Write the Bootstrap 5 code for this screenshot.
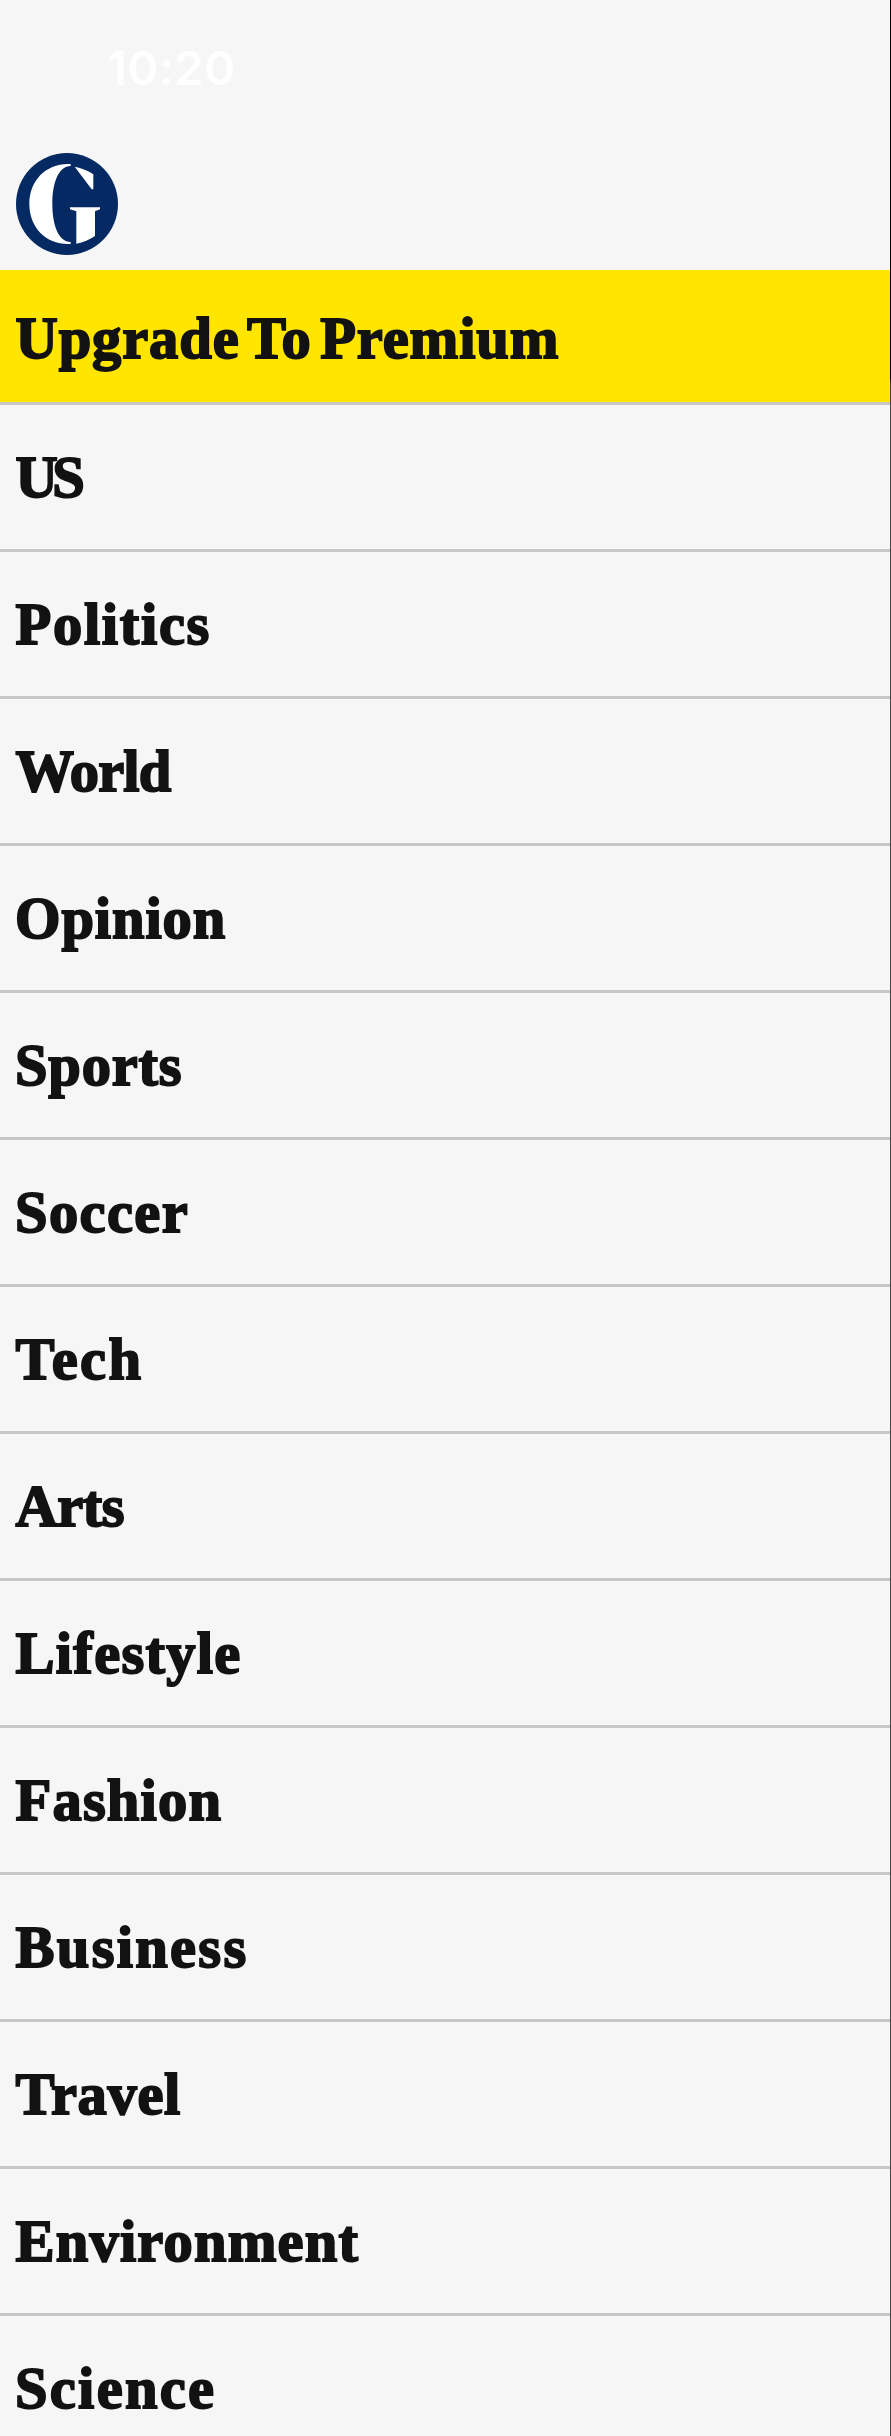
<!DOCTYPE html>
<html lang="en">
<head>
<meta charset="utf-8">
<meta name="viewport" content="width=device-width, initial-scale=1">
<title>Sections</title>
<link href="https://cdn.jsdelivr.net/npm/bootstrap@5.3.0/dist/css/bootstrap.min.css" rel="stylesheet">
<style>
  body { background: #f6f6f6; color: #121212; }
  .app-shell { height: 2436px; }
  .page-edge { width: 1px; background: linear-gradient(#000 0, #000 378px, #444446 384px); }
  .status-bar { height: 153px; padding: 44px 0 0 107px; }
  .clock { font: 600 47px/48px Inter, sans-serif; letter-spacing: .5px; color: #fff; }
  .brand-row { height: 117px; padding-left: 16px; }
  .section-list { --bs-list-group-border-radius: 0; }
  .section-list .section-link {
    height: 147px; padding: 2px 0 0 15.5px; background: transparent; color: #121212;
    border: solid #c7c7c7; border-width: 0 0 3px; border-radius: 0;
    font: bold 58.5px/1.15 "Liberation Serif", serif; white-space: nowrap;
    letter-spacing: var(--track, 0); -webkit-text-stroke: 1.9px #121212;
  }
  .section-list .premium { height: 135px; padding-top: 6px; background: #ffe500; word-spacing: -7px; }
  .section-list .hang-s { padding-left: 15px; }
</style>
</head>
<body>
<div class="app-shell d-flex overflow-hidden">
  <main class="flex-grow-1 d-flex flex-column">
    <header>
      <div class="status-bar"><div class="clock">10:20</div></div>
      <div class="brand-row">
        <svg class="d-block" width="102" height="102" viewBox="48 39 306 306" role="img" aria-label="Home">
          <circle cx="201" cy="192" r="153" fill="#052962"/>
          <g fill="#fff">
            <path d="M212 72C140 68 88 120 88 192s52 124 124 120v-6c-36 0-55-50-55-114s19-114 55-114z"/>
            <path d="M224 80c21 4 40 12 56 23v45h-5z"/>
            <path d="M210 202h90v6l-15 6v74c-16 11-35 19-56 23v-97l-19-6z"/>
          </g>
        </svg>
      </div>
    </header>
    <nav class="section-list list-group" aria-label="Sections">
      <a class="section-link premium list-group-item d-flex align-items-center" style="--track:.9px">Upgrade To Premium</a>
      <a class="section-link list-group-item d-flex align-items-center" style="--track:-5.5px">US</a>
      <a class="section-link list-group-item d-flex align-items-center" style="--track:1.7px">Politics</a>
      <a class="section-link list-group-item d-flex align-items-center" style="--track:-.9px">World</a>
      <a class="section-link hang-s list-group-item d-flex align-items-center" style="--track:.9px">Opinion</a>
      <a class="section-link hang-s list-group-item d-flex align-items-center" style="--track:.8px">Sports</a>
      <a class="section-link hang-s list-group-item d-flex align-items-center" style="--track:1.4px">Soccer</a>
      <a class="section-link list-group-item d-flex align-items-center" style="--track:2.5px">Tech</a>
      <a class="section-link list-group-item d-flex align-items-center" style="--track:-.5px">Arts</a>
      <a class="section-link list-group-item d-flex align-items-center" style="--track:1.3px">Lifestyle</a>
      <a class="section-link list-group-item d-flex align-items-center" style="--track:1.2px">Fashion</a>
      <a class="section-link list-group-item d-flex align-items-center" style="--track:2.3px">Business</a>
      <a class="section-link list-group-item d-flex align-items-center" style="--track:.7px">Travel</a>
      <a class="section-link list-group-item d-flex align-items-center" style="--track:1.2px">Environment</a>
      <a class="section-link hang-s list-group-item d-flex align-items-center" style="--track:2.3px">Science</a>
    </nav>
  </main>
  <div class="page-edge flex-shrink-0"></div>
</div>
<script src="https://cdn.jsdelivr.net/npm/bootstrap@5.3.0/dist/js/bootstrap.bundle.min.js"></script>
</body>
</html>
